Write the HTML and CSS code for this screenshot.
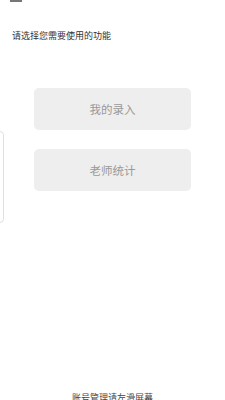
FILE: index.html
```html
<!DOCTYPE html>
<html lang="zh">
<head>
<meta charset="utf-8">
<link rel="stylesheet" href="styles.css">
</head>
<body>
<div class="page">
  <div class="topbar"></div>
  <div class="title">请选择您需要使用的功能</div>
  <div class="menu">
    <div class="btn">我的录入</div>
    <div class="btn">老师统计</div>
  </div>
  <div class="footer">账号管理请左滑屏幕</div>
  <div class="drawer-edge"></div>
</div>
</body>
</html>
```
FILE: styles.css
```css
html, body {
  margin: 0;
  padding: 0;
  background: #ffffff;
}
.page {
  position: relative;
  width: 225px;
  height: 400px;
  overflow: hidden;
  display: flex;
  flex-direction: column;
  font-family: "Noto Sans CJK SC", "Noto Sans", sans-serif;
}
.topbar {
  width: 12px;
  height: 2px;
  margin-left: 10px;
  background: #777777;
}
.title {
  margin-top: 28px;
  margin-left: 12px;
  font-size: 9px;
  line-height: 12px;
  color: #333333;
}
.menu {
  display: flex;
  flex-direction: column;
  gap: 19px;
  margin-top: 46px;
  padding-left: 34px;
}
.btn {
  width: 157px;
  height: 42px;
  border-radius: 5px;
  background: #eeeeee;
  color: #999999;
  font-size: 11.5px;
  display: flex;
  align-items: center;
  justify-content: center;
}
.footer {
  margin-top: auto;
  margin-bottom: -4px;
  text-align: center;
  font-size: 9px;
  line-height: 12px;
  color: #444444;
}
.drawer-edge {
  position: absolute;
  left: -100px;
  top: 131px;
  width: 102px;
  height: 90px;
  border: 1px solid #e0e0e0;
  border-radius: 4px;
}
```
